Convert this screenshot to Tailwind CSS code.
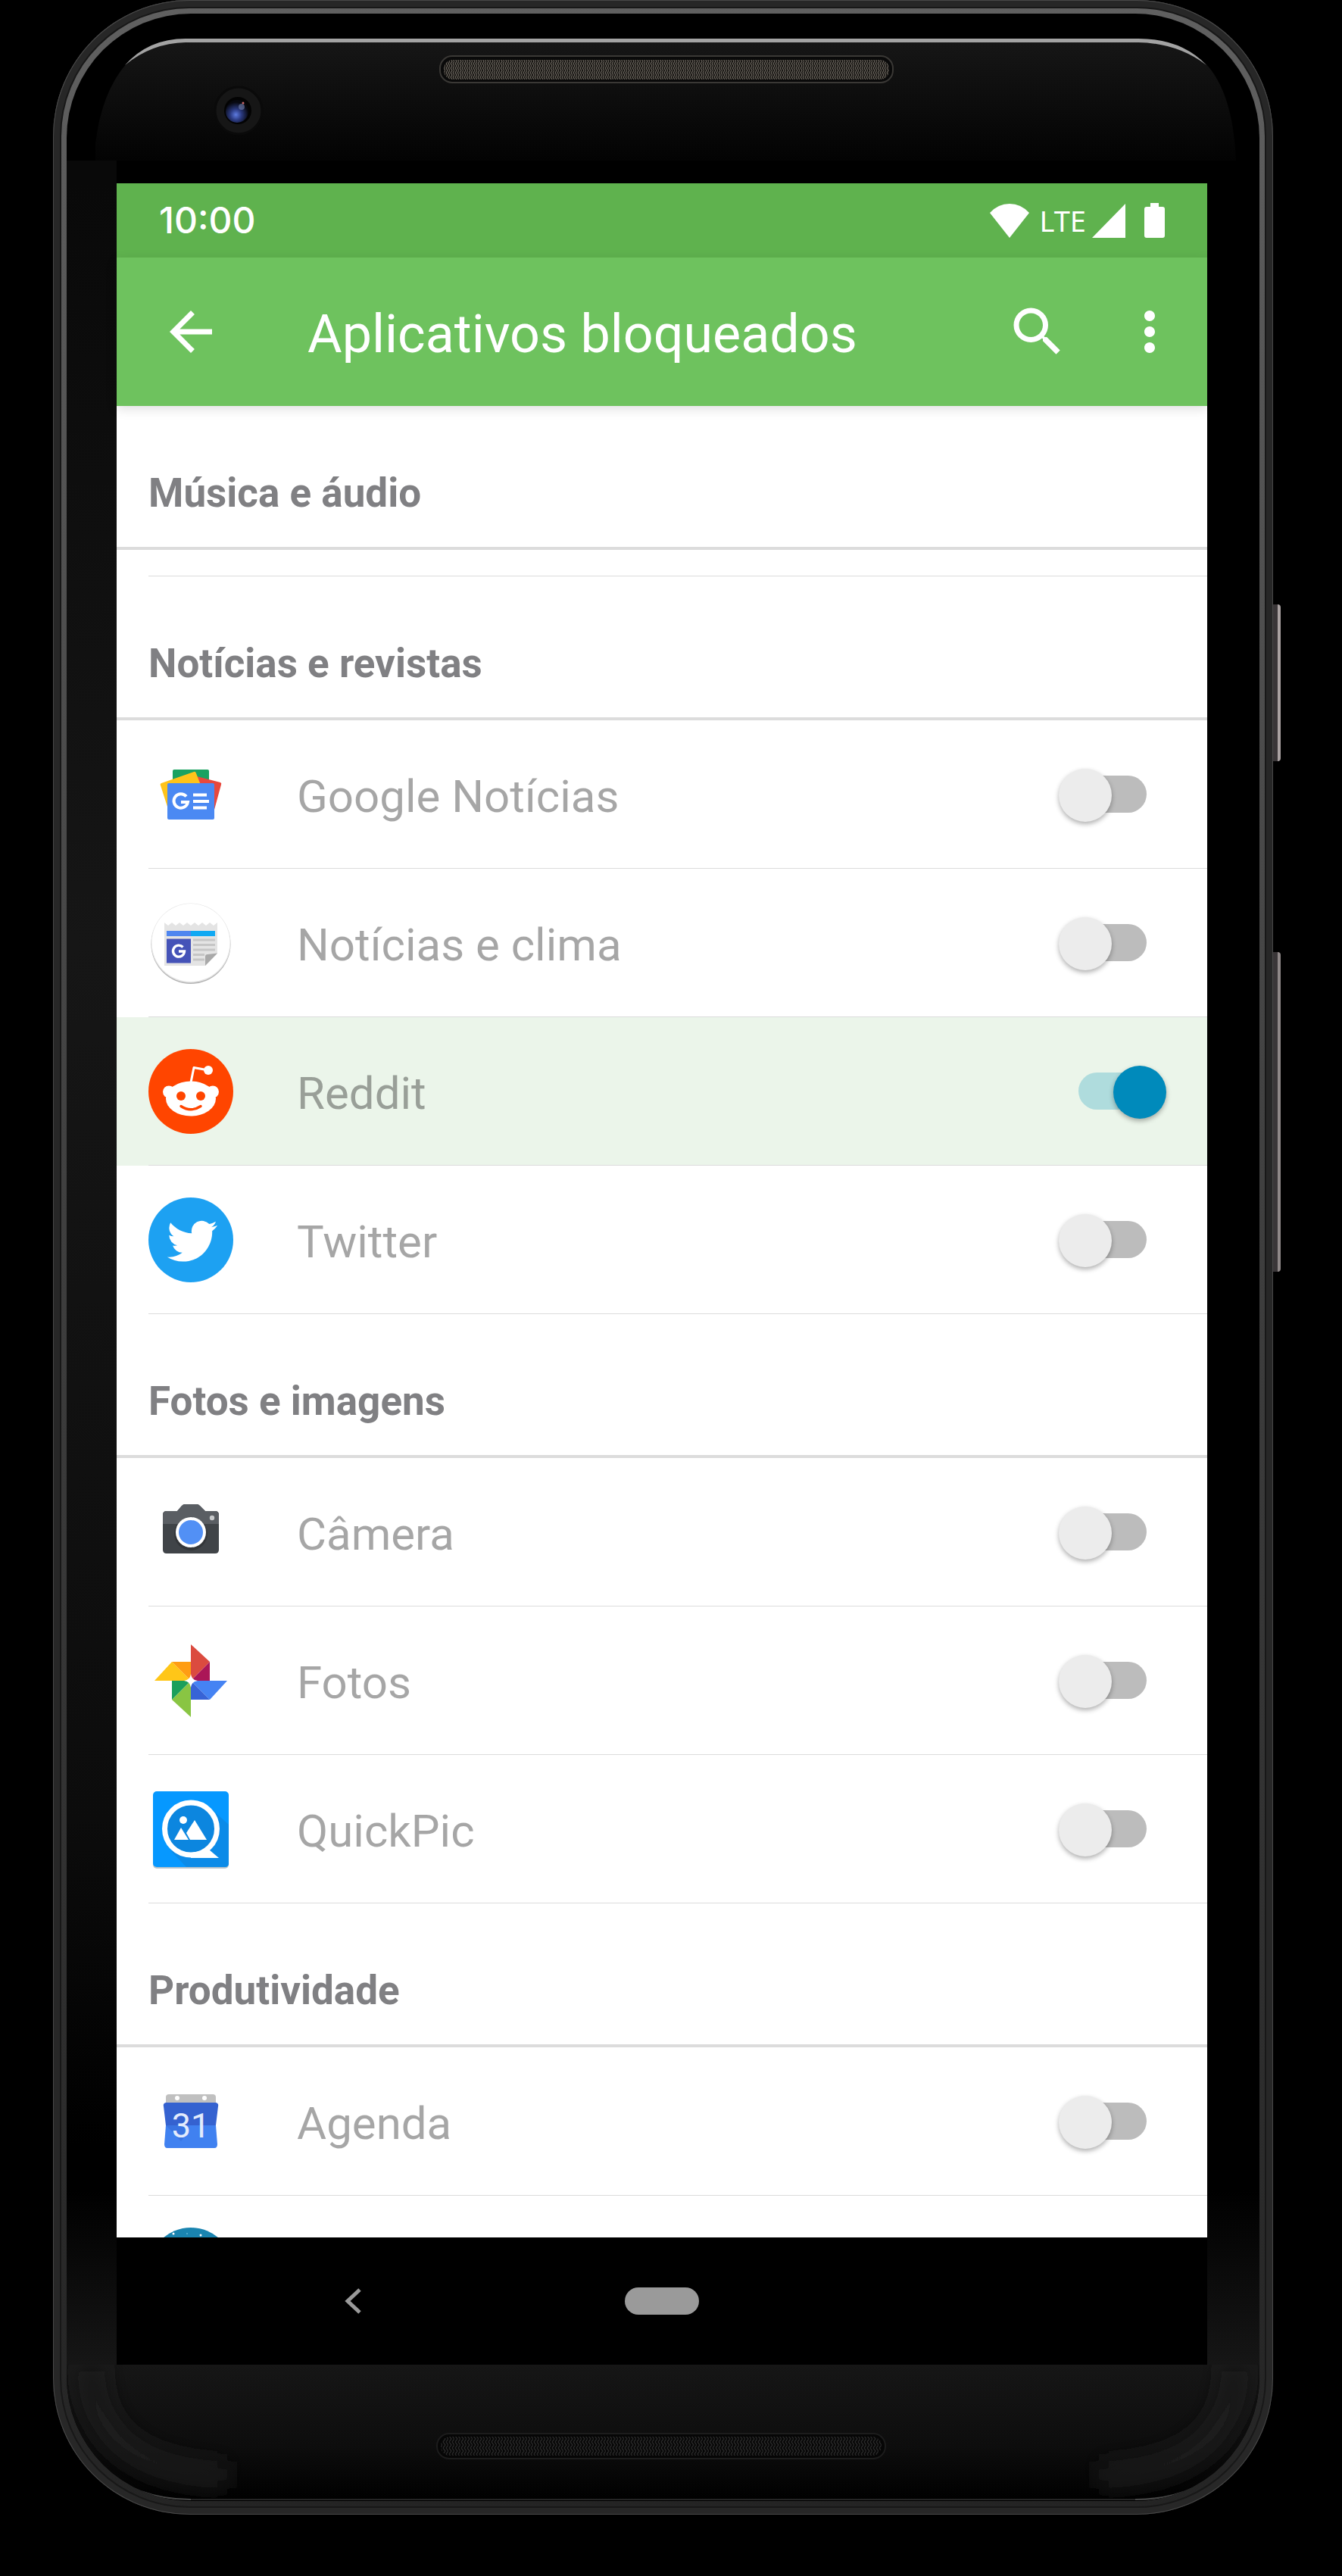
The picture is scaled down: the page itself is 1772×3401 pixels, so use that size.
<!DOCTYPE html>
<html lang="pt-BR">

<head>
    <meta charset="UTF-8">
    <meta name="viewport" content="width=device-width, initial-scale=1.0">
    <title>Aplicativos bloqueados</title>
    <script src="https://cdn.jsdelivr.net/npm/@tailwindcss/browser@4"></script>
</head>

<body class="bg-black min-h-screen pl-[70px] pr-[91px] font-['Roboto',sans-serif]">
    <div class="relative rounded-[180px] p-[18px] bg-linear-to-b from-[#606060] via-[#3e3e3e] to-[#242424] shadow-[inset_0_0_0_1px_#6a6a6a80,inset_0_0_0_9px_#40404060,inset_0_0_0_11px_#181818]">
        <!-- side buttons -->
        <div class="absolute left-full top-[798px] w-[10px] h-[207px] rounded-r-sm bg-[#3a3638] border-r-4 border-[#aaa2a2]"></div>
        <div class="absolute left-full top-[1257px] w-[10px] h-[422px] rounded-r-sm bg-[#3a3638] border-r-4 border-[#8f8888]"></div>

        <div class="rounded-[164px] overflow-hidden bg-black">
            <!-- top bezel: highlight, speaker, camera -->
            <svg class="block w-full" viewBox="88 18 1575 224" aria-hidden="true">
                <defs>
                    <linearGradient id="glass" x1="0" y1="0" x2="0" y2="1">
                        <stop offset="0" stop-color="#161616" />
                        <stop offset="1" stop-color="#030303" />
                    </linearGradient>
                    <pattern id="mesh" width="6" height="6" patternUnits="userSpaceOnUse">
                        <rect width="6" height="6" fill="#14120f" />
                        <path d="M1 0l2 3-2 3M4 0l2 3-2 3" stroke="#69645d" stroke-width="1.2" fill="none" />
                    </pattern>
                    <pattern id="meshDark" width="8" height="8" patternUnits="userSpaceOnUse">
                        <rect width="8" height="8" fill="#060606" />
                        <path d="M1 0l3 4-3 4M5 0l3 4-3 4" stroke="#292929" stroke-width="1.3" fill="none" />
                    </pattern>
                    <radialGradient id="lens" cx=".45" cy=".65" r=".55">
                        <stop offset="0" stop-color="#5d7be0" />
                        <stop offset=".45" stop-color="#2b3a80" />
                        <stop offset="1" stop-color="#07080f" />
                    </radialGradient>
                </defs>
                <path d="M126 212V190Q134 122 167 84Q200 56 250 56H1500Q1560 56 1592 84Q1628 122 1632 212Z" fill="url(#glass)" />
                <path d="M88 212H154V242H88Z" fill="#090909" />
                <path d="M165 86Q196 51 245 51H1503Q1560 51 1593 86Q1555 57 1503 56H245Q200 57 165 86Z" fill="#a3a3a3" />
                <rect x="581" y="74" width="598" height="35" rx="16" fill="#0a0a0a" stroke="#3a3835" stroke-width="2" />
                <rect x="586" y="79" width="588" height="26" rx="12" fill="url(#mesh)" />
                <circle cx="315" cy="146" r="31" fill="#161616" stroke="#0a0a0a" stroke-width="3" />
                <circle cx="314" cy="146" r="18" fill="#030303" />
                <circle cx="313" cy="147" r="15" fill="url(#lens)" />
                <circle cx="319" cy="141" r="4" fill="#7482b0" opacity=".6" />
                <circle cx="321" cy="136" r="1.5" fill="#c66" />
            </svg>

            <div class="pl-[66px] pr-[69px] bg-[linear-gradient(to_bottom,transparent_92%,#161616),linear-gradient(to_right,transparent_5%,#000_95%),linear-gradient(to_bottom,#090909,#161616_35%,#0c0c0c_75%,#000_90%)]">
                <!-- status bar -->
                <div class="h-[98px] bg-[#5fb24e] text-white flex items-center justify-between pl-[56px] pr-[56px]">
                    <time class="font-['Inter',sans-serif] font-medium text-[48px]">10:00</time>
                    <div class="flex items-center">
                        <svg class="w-[52px] h-[45px]" viewBox="0 0 52 45" fill="#fff" aria-label="Wi-Fi"><path d="M0 12Q11 0 26 0T52 12L26 45Z" /></svg>
                        <span class="font-['Noto_Sans',sans-serif] text-[38px] leading-none ml-[14px]">LTE</span>
                        <svg class="w-[44px] h-[45px] ml-[8px]" viewBox="0 0 44 45" fill="#fff" aria-label="Sinal"><path d="M44 0V45H0Z" /></svg>
                        <svg class="w-[27px] h-[46px] ml-[25px]" viewBox="0 0 27 46" fill="#fff" aria-label="Bateria"><path d="M8 0H19V5H24Q27 5 27 8V43Q27 46 24 46H3Q0 46 0 43V8Q0 5 3 5H8Z" /></svg>
                    </div>
                </div>

                <!-- app bar -->
                <header class="relative h-[196px] bg-[#6ec25e] text-white flex items-center pl-[56px] pr-[34px] shadow-[0_4px_14px_#00000020]">
                    <button aria-label="Voltar">
                        <svg class="w-[84px] h-[84px]" viewBox="0 0 24 24" fill="#fff"><path d="M20 11H7.83l5.59-5.59L12 4l-8 8 8 8 1.41-1.41L7.83 13H20v-2z" /></svg>
                    </button>
                    <h1 class="text-[70px] leading-none ml-[112px] pt-1.5 flex-1">Aplicativos bloqueados</h1>
                    <button aria-label="Pesquisar" class="mr-[64px]">
                        <svg class="w-[84px] h-[84px]" viewBox="0 0 24 24" fill="#fff"><path d="M15.5 14h-.79l-.28-.27A6.471 6.471 0 0 0 16 9.5 6.5 6.5 0 1 0 9.5 16c1.61 0 3.09-.59 4.23-1.57l.27.28v.79l5 4.99L20.49 19l-4.99-5zm-6 0C7.01 14 5 11.99 5 9.5S7.01 5 9.5 5 14 7.01 14 9.5 11.99 14 9.5 14z" /></svg>
                    </button>
                    <button aria-label="Mais opções">
                        <svg class="w-[84px] h-[84px]" viewBox="0 0 24 24" fill="#fff"><path d="M12 8c1.1 0 2-.9 2-2s-.9-2-2-2-2 .9-2 2 .9 2 2 2zm0 2c-1.1 0-2 .9-2 2s.9 2 2 2 2-.9 2-2-.9-2-2-2zm0 6c-1.1 0-2 .9-2 2s.9 2 2 2 2-.9 2-2-.9-2-2-2z" /></svg>
                    </button>
                </header>

                <main class="bg-white text-[60px] text-black/35">
                    <h2 class="h-[190px] flex items-end pl-[42px] pb-10 border-b-4 border-[#dcdcdc] font-bold text-[53px] leading-[62px] text-[#808083]">Música e áudio</h2>
                    <div class="h-[35px] ml-[42px] border-b border-[#dcdcdc]"></div>

                    <h2 class="h-[190px] flex items-end pl-[42px] pb-10 border-b-4 border-[#dcdcdc] font-bold text-[53px] leading-[62px] text-[#808083]">Notícias e revistas</h2>
                    <ul>
                        <li class="pl-[42px]">
                            <label class="h-[196px] flex items-center pr-[54px] border-b border-[#dcdcdc]">
                                <svg class="w-[112px] h-[112px] mr-[84px]" viewBox="0 0 112 112" aria-hidden="true">
                                    <rect x="32" y="23" width="48" height="30" rx="2" fill="#1ba261" />
                                    <path d="M64 32L95 40Q97 41 96 43L87 76L60 70Z" fill="#e8483d" />
                                    <path d="M17 41L60 26Q62 25 63 28L74 56L25 72L16 44Q15 42 17 41Z" fill="#ffc31a" />
                                    <rect x="25" y="41" width="62" height="48" rx="2" fill="#4b89f3" />
                                    <path d="M50 58.500A9.300 9.300 0 1 0 52 66H43" fill="none" stroke="#fff" stroke-width="4" />
                                    <path d="M59 56.500H77M59 65H80M59 73.500H77" stroke="#fff" stroke-width="4" />
                                </svg>
                                <span class="flex-1 pt-1.5 leading-none">Google Notícias</span>
                                <input type="checkbox" role="switch" class="appearance-none relative w-[142px] h-[70px] before:absolute before:left-[26px] before:top-[10px] before:w-[90px] before:h-[49px] before:rounded-full before:bg-[#bcbcbc] after:absolute after:left-0 after:top-px after:size-[70px] after:rounded-full after:bg-[#ececec] after:shadow-[0_3px_6px_#00000050] checked:before:bg-[#afdcdd] checked:after:left-[72px] checked:after:bg-[#008abb]">
                            </label>
                        </li>
                        <li class="pl-[42px]">
                            <label class="h-[196px] flex items-center pr-[54px] border-b border-[#dcdcdc]">
                                <svg class="w-[112px] h-[112px] mr-[84px]" viewBox="0 0 112 112" aria-hidden="true">
                                    <circle cx="56" cy="57.500" r="52.500" fill="#b4b4b4" />
                                    <circle cx="56" cy="56" r="52.500" fill="#e4e4e4" />
                                    <circle cx="56" cy="55.500" r="51.500" fill="#fff" />
                                    <path d="M21 29l5 4 5-4 5 4 5-4 5 4 5-4 5 4 5-4 5 4 5-4 5 4 5-4 5 4 5-4V70L75 86H21Z" fill="#e4e4e4" />
                                    <path d="M24 40H56V47H24Z" fill="#4f86f0" />
                                    <path d="M56 40H88V47H56Z" fill="#10a9f3" />
                                    <path d="M24 50.500H56V82.500H24Z" fill="#4553b8" />
                                    <path d="M45.500 61.500A7.500 7.500 0 1 0 47.500 67H40" fill="none" stroke="#fff" stroke-width="3.400" />
                                    <path d="M59 52H88M59 58.500H88M59 65H88M59 71.500H74M59 78H74" stroke="#c6c6c6" stroke-width="3" />
                                    <path d="M75 86V74Q75 71 78 71L91 69.500Z" fill="#a9a9a9" />
                                </svg>
                                <span class="flex-1 pt-1.5 leading-none">Notícias e clima</span>
                                <input type="checkbox" role="switch" class="appearance-none relative w-[142px] h-[70px] before:absolute before:left-[26px] before:top-[10px] before:w-[90px] before:h-[49px] before:rounded-full before:bg-[#bcbcbc] after:absolute after:left-0 after:top-px after:size-[70px] after:rounded-full after:bg-[#ececec] after:shadow-[0_3px_6px_#00000050] checked:before:bg-[#afdcdd] checked:after:left-[72px] checked:after:bg-[#008abb]">
                            </label>
                        </li>
                        <li class="pl-[42px] bg-[#ebf5ea]">
                            <label class="h-[196px] flex items-center pr-[54px] border-b border-[#dcdcdc]">
                                <svg class="w-[112px] h-[112px] mr-[84px]" viewBox="0 0 112 112" aria-hidden="true">
                                    <circle cx="56" cy="56" r="56" fill="#ff4500" />
                                    <g fill="#fff">
                                        <circle cx="27" cy="56.500" r="8" />
                                        <circle cx="85" cy="56.500" r="8" />
                                        <ellipse cx="56" cy="65.500" rx="33" ry="23" />
                                        <circle cx="79" cy="28" r="6" />
                                    </g>
                                    <path d="M56 44L60 24.500L79 28" fill="none" stroke="#fff" stroke-width="3" stroke-linejoin="round" />
                                    <circle cx="43" cy="62" r="6" fill="#ff4500" />
                                    <circle cx="69" cy="62" r="6" fill="#ff4500" />
                                    <path d="M43 75.500Q56 84 69 75.500" fill="none" stroke="#ff4500" stroke-width="3.300" stroke-linecap="round" />
                                </svg>
                                <span class="flex-1 pt-1.5 leading-none">Reddit</span>
                                <input type="checkbox" role="switch" checked class="appearance-none relative w-[142px] h-[70px] before:absolute before:left-[26px] before:top-[10px] before:w-[90px] before:h-[49px] before:rounded-full before:bg-[#bcbcbc] after:absolute after:left-0 after:top-px after:size-[70px] after:rounded-full after:bg-[#ececec] after:shadow-[0_3px_6px_#00000050] checked:before:bg-[#afdcdd] checked:after:left-[72px] checked:after:bg-[#008abb]">
                            </label>
                        </li>
                        <li class="pl-[42px]">
                            <label class="h-[196px] flex items-center pr-[54px] border-b border-[#dcdcdc]">
                                <svg class="w-[112px] h-[112px] mr-[84px]" viewBox="0 0 112 112" aria-hidden="true">
                                    <circle cx="56" cy="56" r="56" fill="#1da1f2" />
                                    <path transform="translate(24.700 24.500) scale(2.760)" fill="#fff" d="M23.953 4.57a10 10 0 01-2.825.775 4.958 4.958 0 002.163-2.723c-.951.555-2.005.959-3.127 1.184a4.92 4.92 0 00-8.384 4.482C7.69 8.095 4.067 6.13 1.64 3.162a4.822 4.822 0 00-.666 2.475c0 1.71.87 3.213 2.188 4.096a4.904 4.904 0 01-2.228-.616v.06a4.923 4.923 0 003.946 4.827 4.996 4.996 0 01-2.212.085 4.936 4.936 0 004.604 3.417 9.867 9.867 0 01-6.102 2.105c-.39 0-.779-.023-1.17-.067a13.995 13.995 0 007.557 2.209c9.053 0 13.998-7.496 13.998-13.985 0-.21 0-.42-.015-.63A9.935 9.935 0 0024 4.59z" />
                                </svg>
                                <span class="flex-1 pt-1.5 leading-none">Twitter</span>
                                <input type="checkbox" role="switch" class="appearance-none relative w-[142px] h-[70px] before:absolute before:left-[26px] before:top-[10px] before:w-[90px] before:h-[49px] before:rounded-full before:bg-[#bcbcbc] after:absolute after:left-0 after:top-px after:size-[70px] after:rounded-full after:bg-[#ececec] after:shadow-[0_3px_6px_#00000050] checked:before:bg-[#afdcdd] checked:after:left-[72px] checked:after:bg-[#008abb]">
                            </label>
                        </li>
                    </ul>

                    <h2 class="h-[190px] flex items-end pl-[42px] pb-10 border-b-4 border-[#dcdcdc] font-bold text-[53px] leading-[62px] text-[#808083]">Fotos e imagens</h2>
                    <ul>
                        <li class="pl-[42px]">
                            <label class="h-[196px] flex items-center pr-[54px] border-b border-[#dcdcdc]">
                                <svg class="w-[112px] h-[112px] mr-[84px]" viewBox="0 0 112 112" aria-hidden="true">
                                    <path d="M24 28H38L44 21Q46 19 48 19H64Q66 19 68 21L75 28H88Q93 28 93 33V79Q93 84 88 84H24Q19 84 19 79V33Q19 28 24 28Z" fill="#404448" />
                                    <path d="M24 28H38L44 21Q46 19 48 19H64Q66 19 68 21L75 28H88Q93 28 93 33V45H19V33Q19 28 24 28Z" fill="#5a5e63" />
                                    <circle cx="56" cy="58" r="22" fill="#000" opacity=".2" />
                                    <circle cx="56" cy="56" r="20" fill="#fff" />
                                    <circle cx="56" cy="56" r="16" fill="#5290f5" />
                                    <circle cx="84" cy="37" r="3.200" fill="#c8cacc" />
                                </svg>
                                <span class="flex-1 pt-1.5 leading-none">Câmera</span>
                                <input type="checkbox" role="switch" class="appearance-none relative w-[142px] h-[70px] before:absolute before:left-[26px] before:top-[10px] before:w-[90px] before:h-[49px] before:rounded-full before:bg-[#bcbcbc] after:absolute after:left-0 after:top-px after:size-[70px] after:rounded-full after:bg-[#ececec] after:shadow-[0_3px_6px_#00000050] checked:before:bg-[#afdcdd] checked:after:left-[72px] checked:after:bg-[#008abb]">
                            </label>
                        </li>
                        <li class="pl-[42px]">
                            <label class="h-[196px] flex items-center pr-[54px] border-b border-[#dcdcdc]">
                                <svg class="w-[112px] h-[112px] mr-[84px]" viewBox="0 0 112 112" aria-hidden="true">
                                    <path d="M56 8L81 31L56 56Z" fill="#db4b3f" />
                                    <path d="M81 31V56H56Z" fill="#ab1657" />
                                    <path d="M104 56L81 81L56 56Z" fill="#4583f3" />
                                    <path d="M81 81H56V56Z" fill="#3763d6" />
                                    <path d="M56 104L31 81L56 56Z" fill="#89c543" />
                                    <path d="M31 81V56H56Z" fill="#1a9f5b" />
                                    <path d="M8 56L31 31L56 56Z" fill="#ffc618" />
                                    <path d="M31 31H56V56Z" fill="#ff9d13" />
                                    <path d="M56 47Q57 55 65 56Q57 57 56 65Q55 57 47 56Q55 55 56 47Z" fill="#fff" />
                                </svg>
                                <span class="flex-1 pt-1.5 leading-none">Fotos</span>
                                <input type="checkbox" role="switch" class="appearance-none relative w-[142px] h-[70px] before:absolute before:left-[26px] before:top-[10px] before:w-[90px] before:h-[49px] before:rounded-full before:bg-[#bcbcbc] after:absolute after:left-0 after:top-px after:size-[70px] after:rounded-full after:bg-[#ececec] after:shadow-[0_3px_6px_#00000050] checked:before:bg-[#afdcdd] checked:after:left-[72px] checked:after:bg-[#008abb]">
                            </label>
                        </li>
                        <li class="pl-[42px]">
                            <label class="h-[196px] flex items-center pr-[54px] border-b border-[#dcdcdc]">
                                <svg class="w-[112px] h-[112px] mr-[84px]" viewBox="0 0 112 112" aria-hidden="true">
                                    <rect x="6" y="8" width="100" height="100" rx="5" fill="#b8c4cc" />
                                    <rect x="6" y="6" width="100" height="100" rx="5" fill="#0698ff" />
                                    <path d="M86 32L106 50V101Q106 106 101 106H50L30 85Z" fill="#0c8be8" />
                                    <circle cx="56" cy="55.500" r="34.500" fill="#0c86df" stroke="#fff" stroke-width="7" />
                                    <path d="M56 87V94H93L80 83Z" fill="#fff" />
                                    <circle cx="46" cy="44" r="5" fill="#fff" />
                                    <path d="M34 70L43 54L53 70ZM55 70L50 61L61 44L77 70Z" fill="#fff" />
                                </svg>
                                <span class="flex-1 pt-1.5 leading-none">QuickPic</span>
                                <input type="checkbox" role="switch" class="appearance-none relative w-[142px] h-[70px] before:absolute before:left-[26px] before:top-[10px] before:w-[90px] before:h-[49px] before:rounded-full before:bg-[#bcbcbc] after:absolute after:left-0 after:top-px after:size-[70px] after:rounded-full after:bg-[#ececec] after:shadow-[0_3px_6px_#00000050] checked:before:bg-[#afdcdd] checked:after:left-[72px] checked:after:bg-[#008abb]">
                            </label>
                        </li>
                    </ul>

                    <h2 class="h-[190px] flex items-end pl-[42px] pb-10 border-b-4 border-[#dcdcdc] font-bold text-[53px] leading-[62px] text-[#808083]">Produtividade</h2>
                    <ul>
                        <li class="pl-[42px]">
                            <label class="h-[196px] flex items-center pr-[54px] border-b border-[#dcdcdc]">
                                <svg class="w-[112px] h-[112px] mr-[84px]" viewBox="0 0 112 112" aria-hidden="true">
                                    <path d="M27 20H85Q89 20 89 24V34H23V24Q23 20 27 20Z" fill="#c0c0c0" />
                                    <circle cx="38" cy="25" r="3" fill="#fff" />
                                    <circle cx="74" cy="25" r="3" fill="#fff" />
                                    <path d="M23 31H89Q93 32 92 36L89 61H23L20 36Q19 32 23 31Z" fill="#3562d0" />
                                    <path d="M23 61H89L91 86Q91 91 87 91H25Q21 91 21 86Z" fill="#4081f0" />
                                    <path d="M23 61L32 70L38 77L43 82L47 77L50 61Z" fill="#3a74e2" />
                                    <text x="56" y="77" text-anchor="middle" font-family="Roboto, sans-serif" font-weight="400" font-size="45" fill="#e3ebfc">31</text>
                                </svg>
                                <span class="flex-1 pt-1.5 leading-none">Agenda</span>
                                <input type="checkbox" role="switch" class="appearance-none relative w-[142px] h-[70px] before:absolute before:left-[26px] before:top-[10px] before:w-[90px] before:h-[49px] before:rounded-full before:bg-[#bcbcbc] after:absolute after:left-0 after:top-px after:size-[70px] after:rounded-full after:bg-[#ececec] after:shadow-[0_3px_6px_#00000050] checked:before:bg-[#afdcdd] checked:after:left-[72px] checked:after:bg-[#008abb]">
                            </label>
                        </li>
                        <li class="pl-[42px] pt-[42px] h-[55px] overflow-hidden">
                            <svg class="w-[112px] h-[112px]" viewBox="0 0 112 112" aria-hidden="true">
                                <circle cx="56" cy="56" r="56" fill="#1a84b0" />
                                <circle cx="33" cy="8" r="1.500" fill="#fff" />
                                <circle cx="69" cy="10" r="1.500" fill="#fff" />
                                <circle cx="51" cy="8" r="1" fill="#5fb3d2" />
                            </svg>
                        </li>
                    </ul>
                </main>

                <!-- navigation bar -->
                <nav class="h-[168px] bg-black grid grid-cols-[624px_1fr_624px] items-center justify-items-center">
                    <button aria-label="Voltar">
                        <svg class="w-[22px] h-[34px]" viewBox="0 0 22 34" fill="none" stroke="#9a9a9a" stroke-width="5"><path d="M20 2L4 17L20 32" /></svg>
                    </button>
                    <button aria-label="Início" class="w-[98px] h-[36px] rounded-full bg-[#9a9a9a]"></button>
                </nav>
            </div>

            <!-- bottom bezel -->
            <svg class="block w-full" viewBox="88 3122 1575 180" aria-hidden="true">
                <defs>
                    <linearGradient id="chin" x1="0" y1="0" x2="0" y2="1">
                        <stop offset="0" stop-color="#161616" />
                        <stop offset=".6" stop-color="#0d0d0d" />
                        <stop offset="1" stop-color="#000" />
                    </linearGradient>
                    <filter id="soft" x="-50%" y="-50%" width="200%" height="200%">
                        <feGaussianBlur stdDeviation="14" />
                    </filter>
                </defs>
                <rect x="88" y="3122" width="1575" height="180" fill="url(#chin)" />
                <g fill="none" stroke="#1b1b1b" stroke-width="36" filter="url(#soft)">
                    <path d="M120 3122Q120 3262 300 3268" />
                    <path d="M1631 3122Q1631 3262 1451 3268" />
                </g>
                <g fill="none" stroke="#484848" stroke-width="2">
                    <path d="M133 3257Q180 3300 252 3300" />
                    <path d="M1618 3257Q1571 3300 1499 3300" />
                    <path d="M252 3300H1499" stroke="#242424" />
                </g>
                <rect x="577" y="3213" width="592" height="33" rx="16" fill="#060606" stroke="#1c1c1c" stroke-width="2" />
                <rect x="582" y="3217" width="582" height="25" rx="12" fill="url(#meshDark)" />
            </svg>
        </div>
    </div>
</body>
</html>
